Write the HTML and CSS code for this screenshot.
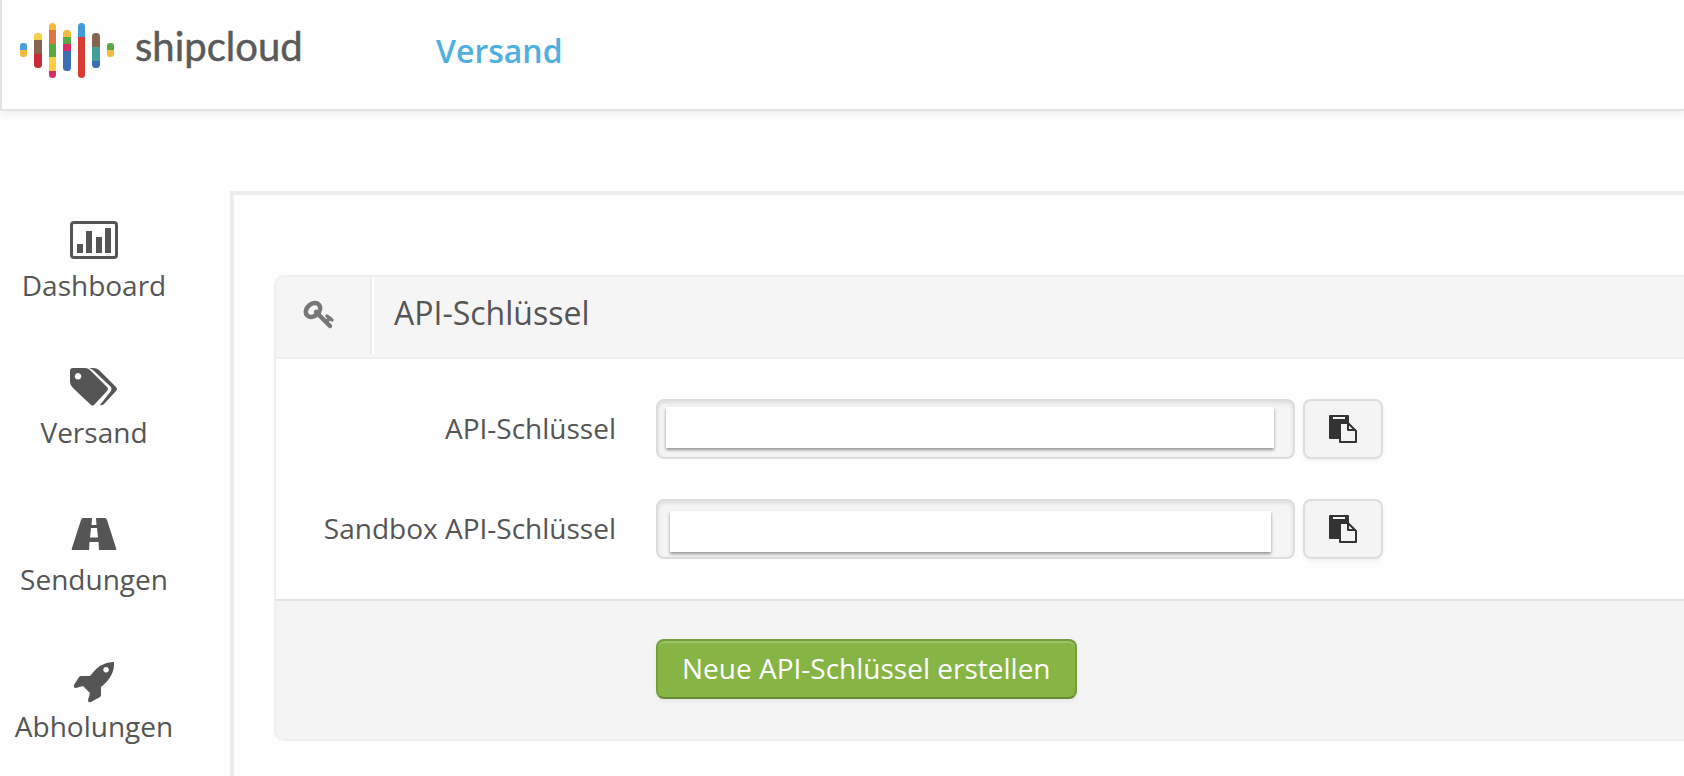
FILE: index.html
```html
<!DOCTYPE html>
<html lang="de">

<head>
    <title>shipcloud | API-Schlüssel</title>
    <meta charset="UTF-8">
    <meta name="viewport" content="width=device-width, initial-scale=1.0">
    <link rel="stylesheet" href="styles.css">
</head>

<body>
    <header class="topbar">
        <a class="logo" href="#" aria-label="shipcloud">
            <svg width="282" height="57" viewBox="0 0 282 57" aria-hidden="true">
                <defs>
                    <clipPath id="logoBars">
                        <rect x="0" y="20" width="7" height="14" rx="3" />
                        <rect x="14" y="10" width="8" height="35" rx="3.5" />
                        <rect x="29" y="0" width="7" height="55" rx="3.5" />
                        <rect x="43" y="7" width="8" height="41" rx="3.5" />
                        <rect x="58" y="0" width="7" height="55" rx="3.5" />
                        <rect x="72" y="10" width="8" height="35" rx="3.5" />
                        <rect x="87" y="20" width="7" height="14" rx="3" />
                    </clipPath>
                </defs>
                <g clip-path="url(#logoBars)">
                    <path fill="#479fdc" d="M0 20h7v7H0z" />
                    <path fill="#f2ba3f" d="M0 27h7v7H0z" />
                    <path fill="#f9cf46" d="M14 10h8v7h-8z" />
                    <path fill="#85654f" d="M14 17h8v14h-8z" />
                    <path fill="#c72c35" d="M14 31h8v14h-8z" />
                    <path fill="#f2ba3f" d="M29 0h7v7h-7z" />
                    <path fill="#e07447" d="M29 7h7v14h-7z" />
                    <path fill="#58a846" d="M29 21h7v13h-7z" />
                    <path fill="#f9cf46" d="M29 34h7v14h-7z" />
                    <path fill="#d82c68" d="M29 48h7v7h-7z" />
                    <path fill="#f2ba3f" d="M43 7h8v7h-8z" />
                    <path fill="#58a846" d="M43 14h8v7h-8z" />
                    <path fill="#d82c68" d="M43 21h8v7h-8z" />
                    <path fill="#3a6fb5" d="M43 28h8v20h-8z" />
                    <path fill="#4799d6" d="M58 0h7v14h-7z" />
                    <path fill="#d63c32" d="M58 14h7v41h-7z" />
                    <path fill="#85654f" d="M72 10h8v14h-8z" />
                    <path fill="#459f98" d="M72 24h8v14h-8z" />
                    <path fill="#3a6fb5" d="M72 38h8v7h-8z" />
                    <path fill="#58a846" d="M87 20h7v7h-7z" />
                    <path fill="#f2ba3f" d="M87 27h7v7h-7z" />
                </g>
                <text class="logo-text" x="115" y="38">shipcloud</text>
            </svg>
        </a>
        <nav class="topnav">
            <a class="topnav-link" href="#">Versand</a>
        </nav>
    </header>

    <div class="page">
        <nav class="sidebar">
            <a class="sidebar-item" href="#">
                <svg class="sidebar-icon" viewBox="0 0 48 48" aria-hidden="true">
                    <rect x="1.5" y="6.5" width="45" height="35" rx="2.5" fill="none" stroke="currentColor" stroke-width="3" />
                    <path d="M7 28h6v9H7zM16 15h6v22h-6zM26 21h6v16h-6zM35 12h6v25h-6z" />
                </svg>
                Dashboard
            </a>
            <a class="sidebar-item" href="#">
                <svg class="sidebar-icon" viewBox="0 0 48 48" aria-hidden="true">
                    <path fill-rule="evenodd" d="M3 5h12q3 0 5 2l17 17q2 2 0 4L24 42q-2 1-3 0L3 25q-3-3-3-6V8q0-3 3-3zM8 10a3.300 3.300 0 1 0 .1 0z" />
                    <path d="M19 5h4q4 0 6 2l17 17q2 2 0 4L34 41q-2 2-4 1l11-14q1-2 0-4L24 8q-2-2-5-3z" />
                </svg>
                Versand
            </a>
            <a class="sidebar-item" href="#">
                <svg class="sidebar-icon" viewBox="0 0 48 48" aria-hidden="true">
                    <path fill-rule="evenodd" d="M13 8h9l-.5 7h5L26 8h9q1 0 2 2l9 28q1 2-1 2H29l-.5-8h-9L19 40H3q-2 0-1-2l9-28q1-2 2-2zM21 18h6l1 9.500h-8z" />
                </svg>
                Sendungen
            </a>
            <a class="sidebar-item" href="#">
                <svg class="sidebar-icon" viewBox="0 0 48 48" aria-hidden="true">
                    <path fill-rule="evenodd" d="M44 5q1 14-13 25v8q0 1-1 2l-9 5q-3 1-3-2l2-7-7-7-7 2q-3 0-2-3l5-8q1-1 2-1h9Q31 4 44 5zM36 10a2.800 2.800 0 1 0 .1 0z" />
                </svg>
                Abholungen
            </a>
        </nav>

        <main class="content">
            <section class="panel">
                <header class="panel-header">
                    <span class="panel-icon">
                        <svg width="32" height="32" viewBox="0 0 32 32" fill="none" stroke="currentColor" stroke-linecap="round" aria-hidden="true">
                            <ellipse cx="10" cy="10" rx="8" ry="6" stroke-width="4.5" transform="rotate(-42 10 10)" />
                            <path stroke-width="4.5" d="M13 12l14 14" />
                            <path stroke-width="3.5" d="M23 22l4-4M24 16l5 4" />
                        </svg>
                    </span>
                    <h1 class="panel-title">API-Schlüssel</h1>
                </header>
                <form class="key-form">
                    <div class="panel-body">
                        <div class="form-row">
                            <label class="form-label" for="liveKey">API-Schlüssel</label>
                            <div class="key-controls">
                                <div class="key-field">
                                    <input class="key-input" id="liveKey" type="text" readonly>
                                </div>
                                <button class="copy-button" type="button" aria-label="Kopieren">
                                    <svg width="28" height="28" viewBox="0 0 28 28" aria-hidden="true">
                                        <path fill="#333" fill-rule="evenodd" d="M1 0h18q1 0 1 1v8H10v15H1q-1 0-1-1V1q0-1 1-1zM4 2v2h12V2z" />
                                        <path fill="#f4f4f4" stroke="#333" stroke-width="2" stroke-linejoin="round" d="M11 8h8l8 8v11H11zM19 8v7h8" />
                                    </svg>
                                </button>
                            </div>
                        </div>
                        <div class="form-row">
                            <label class="form-label" for="sandboxKey">Sandbox API-Schlüssel</label>
                            <div class="key-controls">
                                <div class="key-field key-field-sandbox">
                                    <input class="key-input" id="sandboxKey" type="text" readonly>
                                </div>
                                <button class="copy-button" type="button" aria-label="Kopieren">
                                    <svg width="28" height="28" viewBox="0 0 28 28" aria-hidden="true">
                                        <path fill="#333" fill-rule="evenodd" d="M1 0h18q1 0 1 1v8H10v15H1q-1 0-1-1V1q0-1 1-1zM4 2v2h12V2z" />
                                        <path fill="#f4f4f4" stroke="#333" stroke-width="2" stroke-linejoin="round" d="M11 8h8l8 8v11H11zM19 8v7h8" />
                                    </svg>
                                </button>
                            </div>
                        </div>
                    </div>
                    <footer class="panel-footer">
                        <button class="create-button" type="button">Neue API-Schlüssel erstellen</button>
                    </footer>
                </form>
            </section>
        </main>
    </div>
</body>

</html>
```
FILE: styles.css
```css
* {
    box-sizing: border-box;
}

body {
    margin: 0;
    min-height: 100vh;
    display: flex;
    flex-direction: column;
    overflow-x: hidden;
    background: #fefefe;
    color: #555;
    font-family: "Open Sans", "Noto Sans", sans-serif;
    font-size: 28px;
    line-height: 38px;
}

a {
    color: inherit;
    text-decoration: none;
}

button,
input {
    font: inherit;
}

.topbar {
    display: flex;
    align-items: center;
    height: 111px;
    padding: 0 18px 6px;
    background: #fefefe;
    border-left: 2px solid #e2e2e2;
    border-bottom: 2px solid #e2e2e2;
    box-shadow: 0 2px 8px rgba(0, 0, 0, .08);
}

.logo svg {
    display: block;
}

.logo-text {
    fill: #5a5a5a;
    stroke: #5a5a5a;
    stroke-width: .5px;
    font-family: Lato, "Open Sans", sans-serif;
    font-size: 40px;
}

.topnav {
    margin-left: 134px;
}

.topnav-link {
    color: #4fb0de;
    font-size: 32px;
    font-weight: 600;
}

.page {
    flex: 1;
    display: flex;
    padding-top: 80px;
}

.sidebar {
    width: 230px;
    flex-shrink: 0;
    display: flex;
    flex-direction: column;
    gap: 59px;
    padding: 25px 42px 0 0;
}

.sidebar-item {
    display: flex;
    flex-direction: column;
    align-items: center;
    gap: 2px;
}

.sidebar-icon {
    width: 48px;
    height: 48px;
    fill: currentColor;
}

.content {
    flex: 1;
    min-width: 0;
    padding: 80px 0 32px 40px;
    border-top: 4px solid #ededed;
    border-left: 4px solid #ededed;
}

.panel {
    border: 2px solid #efefef;
    border-right: 0;
    border-radius: 10px 0 0 10px;
    background: #fefefe;
    overflow: hidden;
}

.panel-header {
    display: flex;
    align-items: flex-start;
    height: 82px;
    background: #f5f5f5;
    border-bottom: 2px solid #efefef;
}

.panel-icon {
    display: flex;
    align-items: center;
    width: 96px;
    height: 77px;
    padding-left: 27px;
    border-right: 2px solid #ebebeb;
    box-shadow: 2px 0 #fff;
    color: #777;
}

.panel-title {
    margin: 0;
    padding-left: 22px;
    font-size: 32px;
    font-weight: 400;
    line-height: 72px;
}

.panel-body {
    display: flex;
    flex-direction: column;
    gap: 40px;
    padding: 40px 0;
}

.form-row {
    display: flex;
    align-items: center;
    gap: 40px;
}

.form-label {
    width: 340px;
    flex-shrink: 0;
    padding-bottom: 2px;
    text-align: right;
}

.key-controls {
    flex: 0 1 727px;
    display: flex;
    gap: 8px;
}

.key-field {
    flex: 1;
    height: 60px;
    padding: 6px 19px 9px 8px;
    background: #f5f5f5;
    border: 2px solid #ddd;
    border-radius: 8px;
    box-shadow: inset 0 2px 4px rgba(0, 0, 0, .1);
}

.key-field-sandbox {
    padding: 10px 22px 5px 12px;
}

.key-input {
    display: block;
    width: 100%;
    height: 41px;
    padding: 0 8px;
    border: 0;
    background: #fff;
    color: #555;
    box-shadow: 0 2px 3px rgba(0, 0, 0, .4);
}

.copy-button {
    display: flex;
    align-items: center;
    justify-content: center;
    width: 80px;
    height: 60px;
    padding: 0;
    background: #f4f4f4;
    border: 2px solid #ddd;
    border-radius: 8px;
    box-shadow: 0 2px 4px rgba(0, 0, 0, .06);
}

.panel-footer {
    padding: 38px 0 40px 380px;
    background: #f4f4f4;
    border-top: 2px solid #e3e3e3;
}

.create-button {
    display: block;
    height: 60px;
    padding: 0 24px 2px;
    color: #fff;
    background: #86b546;
    border: 2px solid #739e3a;
    border-bottom-color: #658b34;
    border-radius: 8px;
    box-shadow: inset 0 2px #9bc466, 0 2px 4px rgba(0, 0, 0, .06);
}
```
